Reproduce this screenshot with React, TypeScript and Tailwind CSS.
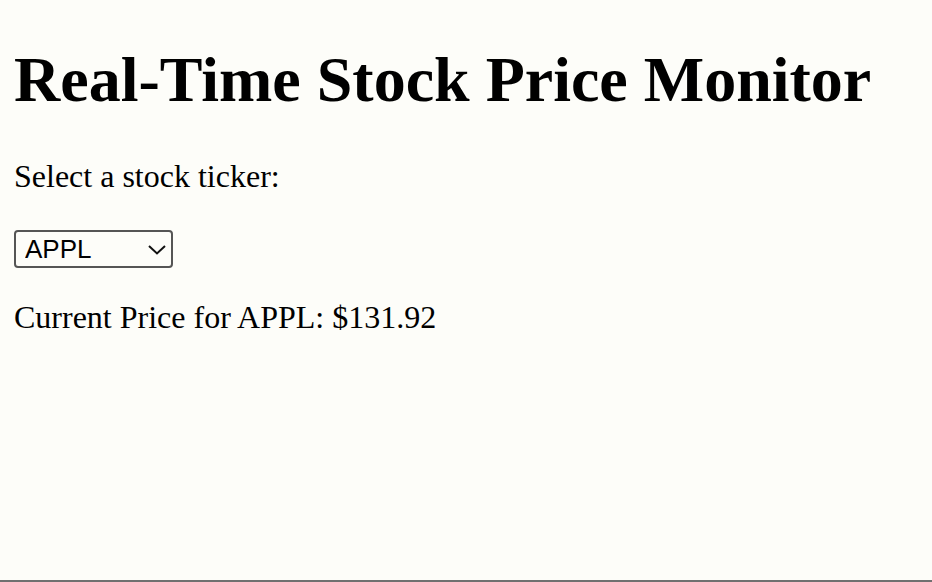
export default function App() {
  return (
    <div
      className="h-[582px] w-[932px] bg-[#fdfdf9] border-b-2 border-[#707070] px-[14px] flex flex-col text-black"
      style={{ fontFamily: '"Liberation Serif", "Times New Roman", serif' }}
    >
      <h1 className="text-[64px] font-bold leading-[74px] mt-[43px]">Real-Time Stock Price Monitor</h1>
      <p className="text-[32px] leading-[37px] mt-[41px]">Select a stock ticker:</p>
      <div className="relative mt-[35px] w-[159px] h-[38px]">
        <select
          className="appearance-none w-full h-full border-2 border-[#555555] rounded-[4px] bg-transparent pl-[9px] text-[26px] leading-none text-black outline-none"
          style={{ fontFamily: '"Liberation Sans", Arial, sans-serif' }}
          defaultValue="APPL"
        >
          <option value="APPL">APPL</option>
          <option value="GOOGL">GOOGL</option>
          <option value="MSFT">MSFT</option>
        </select>
        <svg
          className="absolute left-[134px] top-[15px] pointer-events-none"
          width="18"
          height="10"
          viewBox="0 0 18 10"
          fill="none"
        >
          <path d="M1 1L9 8.5L17 1" stroke="#111" strokeWidth="2" />
        </svg>
      </div>
      <p className="text-[32px] leading-[37px] mt-[31px]">Current Price for APPL: $131.92</p>
    </div>
  );
}
